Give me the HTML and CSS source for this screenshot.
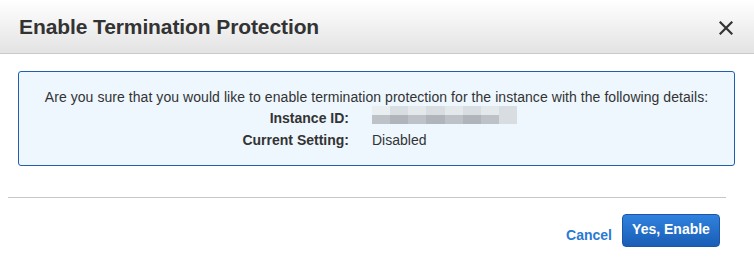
FILE: index.html
```html
<!DOCTYPE html>
<html lang="en">
  <head>
    <meta charset="UTF-8" />
    <meta name="viewport" content="width=device-width, initial-scale=1.0" />
    <title>Enable Termination Protection</title>
    <link rel="stylesheet" href="styles.css">
  </head>
  <body>
  <div class="modal">
    <div class="modal-header">
      <h2 class="modal-title">Enable Termination Protection</h2>
      <button class="close-btn" aria-label="Close">
        <svg width="14" height="14" viewBox="0 0 14 14">
          <path d="M1.5 1.5 L12.5 12.5 M12.5 1.5 L1.5 12.5" stroke="#333" stroke-width="2.2" stroke-linecap="square" fill="none"/>
        </svg>
      </button>
    </div>

    <div class="modal-body">
      <div class="info-box">
        <p class="question">Are you sure that you would like to enable termination protection for the instance with the following details:</p>
        <div class="details">
          <div class="label">Instance ID:</div>
          <div class="value">
            <div class="blurred">
              <div class="blur-row top">
                <span></span><span></span><span></span><span></span><span></span><span></span><span></span><span></span>
              </div>
              <div class="blur-row bottom">
                <span></span><span></span><span></span><span></span><span></span><span></span><span></span><span></span>
              </div>
            </div>
          </div>
          <div class="label">Current Setting:</div>
          <div class="value">Disabled</div>
        </div>
      </div>
    </div>

    <hr class="divider">

    <div class="modal-footer">
      <a class="cancel-link" href="#">Cancel</a>
      <button class="primary-btn">Yes, Enable</button>
    </div>
  </div>
  </body>
</html>
```

FILE: styles.css
```css
body
{
    margin: 0;
    background: #fff;
    font-family: "Liberation Sans", Arial, Helvetica, sans-serif;
    color: #333;
}

.modal
{
    width: 754px;
    height: 261px;
    background: #fff;
}

.modal-header
{
    height: 53px;
    display: flex;
    align-items: center;
    justify-content: space-between;
    padding: 0 19px 0 19px;
    background: linear-gradient(to bottom, #ffffff, #e3e3e3);
    border-bottom: 1px solid #c9c9c9;
}

.modal-title
{
    margin: 0;
    font-size: 21px;
    font-weight: bold;
    color: #333;
    padding-top: 1px;
    letter-spacing: -0.1px;
}

.close-btn
{
    border: none;
    background: none;
    padding: 0;
    width: 14px;
    height: 14px;
    margin-right: 2px;
    margin-top: 3px;
    cursor: pointer;
}

.modal-body
{
    padding: 17px 19px 0 18px;
}

.info-box
{
    border: 1px solid #1f5fb0;
    border-radius: 3px;
    background: #eef7fe;
    box-sizing: border-box;
    height: 95px;
    padding-top: 15px;
    font-size: 14px;
    color: #333;
}

.question
{
    margin: 0;
    text-align: center;
    line-height: 20px;
    letter-spacing: 0.06px;
}

.details
{
    display: grid;
    grid-template-columns: 330px 1fr;
    column-gap: 23px;
    line-height: 22px;
}

.label
{
    text-align: right;
    font-weight: bold;
}

.value
{
    display: flex;
    align-items: center;
}

.blurred
{
    width: 145px;
    height: 19px;
    margin-top: -5px;
    display: flex;
    flex-direction: column;
}

.blur-row
{
    display: flex;
    height: 9px;
}

.blur-row span
{
    flex: 1;
}

.blur-row.top span:nth-child(odd) { background: #e3e8eb; }
.blur-row.top span:nth-child(even) { background: #d8dde2; }
.blur-row.bottom span:nth-child(odd) { background: #bcc2c7; }
.blur-row.bottom span:nth-child(even) { background: #afb5ba; }
.blur-row.top span:first-child { background: #e9eef1; }
.blur-row.bottom span:last-child { background: #d8dde1; }

.divider
{
    border: none;
    border-top: 1px solid #c6c6c6;
    margin: 31px 28px 0 8px;
}

.modal-footer
{
    display: flex;
    justify-content: flex-end;
    align-items: center;
    padding: 16px 34px 0 0;
}

.cancel-link
{
    color: #2a7ad3;
    font-weight: bold;
    font-size: 14px;
    text-decoration: none;
    margin-right: 10px;
    margin-top: 8px;
}

.primary-btn
{
    width: 98px;
    height: 33px;
    border: 1px solid #1b57a6;
    border-radius: 4px;
    background: linear-gradient(to bottom, #2f82de, #1a5db6);
    color: #fff;
    font-family: "Liberation Sans", Arial, Helvetica, sans-serif;
    font-weight: bold;
    font-size: 14px;
    padding: 0;
    padding-bottom: 3px;
    cursor: pointer;
}
```
